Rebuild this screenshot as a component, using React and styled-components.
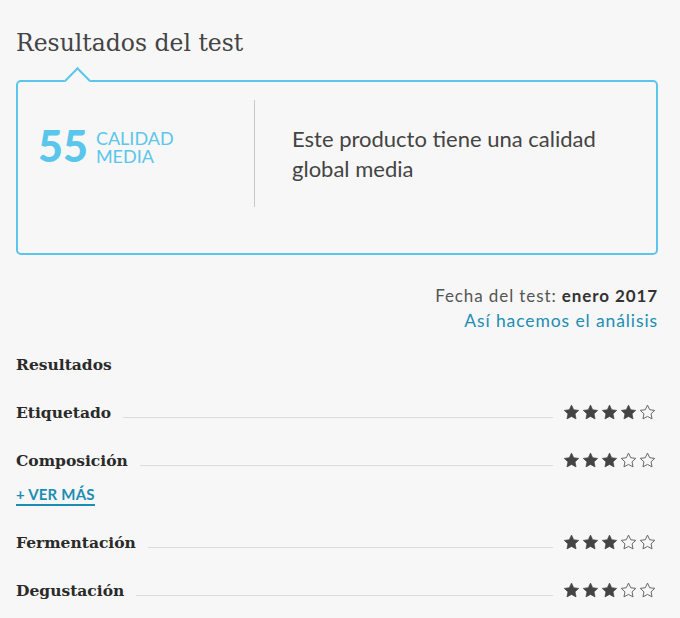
import React from 'react';
import styled, { createGlobalStyle } from 'styled-components';

const BLUE = '#5bc6ec';
const LINK = '#1c8db3';
const TEXT = '#444444';

const GlobalStyle = createGlobalStyle`
  html, body {
    margin: 0;
    padding: 0;
    background: #f7f7f7;
  }
  body {
    font-family: Lato, "Open Sans", sans-serif;
    color: ${TEXT};
  }
`;

const Page = styled.div`
  width: 642px;
  padding: 28px 22px 0 16px;
`;

const Title = styled.h1`
  margin: 0;
  font-family: "DejaVu Serif", serif;
  font-weight: 400;
  font-size: 23.5px;
  line-height: 30px;
  color: ${TEXT};
`;

const Box = styled.section`
  position: relative;
  margin-top: 22px;
  display: flex;
  height: 175px;
  box-sizing: border-box;
  padding: 18px 0 0;
  border: 2px solid ${BLUE};
  border-radius: 5px;

  &::before {
    content: '';
    position: absolute;
    top: -11px;
    left: 50px;
    width: 17px;
    height: 17px;
    background: #f7f7f7;
    border-top: 2px solid ${BLUE};
    border-left: 2px solid ${BLUE};
    transform: rotate(45deg);
  }
`;

const ScoreCol = styled.div`
  width: 216px;
  padding: 28px 0 0 20px;
  display: flex;
  align-items: flex-start;
  gap: 8px;
`;

const Score = styled.span`
  font-size: 43px;
  font-weight: 900;
  line-height: 36px;
  color: ${BLUE};
`;

const ScoreLabel = styled.span`
  font-size: 18px;
  line-height: 18px;
  text-transform: uppercase;
  color: ${BLUE};
  padding-top: 1px;
`;

const Summary = styled.div`
  align-self: flex-start;
  height: 83px;
  flex: 1;
  border-left: 1px solid #c8c8c8;
  padding: 24px 40px 0 37px;
  font-size: 22px;
  line-height: 30px;
  color: ${TEXT};
`;

const Meta = styled.div`
  margin-top: 28px;
  text-align: right;
  font-size: 17px;
  line-height: 25px;
  letter-spacing: 0.9px;
  color: #555;

  b {
    color: #333;
    font-weight: 700;
  }
`;

const Link = styled.a`
  color: ${LINK};
  text-decoration: none;
  font-size: 17.5px;
`;

const SectionTitle = styled.h2`
  margin: 17px 0 0;
  font-family: "DejaVu Serif", serif;
  font-weight: 700;
  font-size: 15.5px;
  line-height: 30px;
  color: #2a2a2a;
`;

const Row = styled.div`
  display: flex;
  align-items: center;
  height: 48px;
  margin-top: ${p => p.$gap || 0}px;
`;

const Label = styled.span`
  font-family: "DejaVu Serif", serif;
  font-weight: 700;
  font-size: 15.5px;
  color: #2a2a2a;
`;

const Leader = styled.span`
  flex: 1;
  height: 1px;
  margin: 10px 10px 0 12px;
  background: #dcdcdc;
`;

const Stars = styled.span`
  display: flex;
  gap: 2px;
  margin-right: 2px;
`;

const MoreLink = styled.a`
  display: inline-block;
  font-size: 15px;
  font-weight: 700;
  line-height: 18px;
  letter-spacing: 0.2px;
  color: ${LINK};
  text-decoration: none;
  border-bottom: 2px solid ${LINK};
  padding-bottom: 1px;
`;

const STAR = 'M12 1.5l3.1 6.6 7.1.9-5.2 4.9 1.4 7.1L12 17.5 5.6 21l1.4-7.1L1.8 9l7.1-.9z';

const Star = ({ filled }) => (
  <svg width="17" height="17" viewBox="0 0 24 24">
    <path
      d={STAR}
      fill={filled ? '#444' : 'none'}
      stroke={filled ? '#444' : '#666'}
      strokeWidth={filled ? 1 : 1.4}
      strokeLinejoin="round"
    />
  </svg>
);

const Rating = ({ value }) => (
  <Stars>
    {[1, 2, 3, 4, 5].map(i => (
      <Star key={i} filled={i <= value} />
    ))}
  </Stars>
);

const ResultRow = ({ label, value, gap }) => (
  <Row $gap={gap}>
    <Label>{label}</Label>
    <Leader />
    <Rating value={value} />
  </Row>
);

export default function App() {
  return (
    <Page>
      <GlobalStyle />
      <Title>Resultados del test</Title>
      <Box>
        <ScoreCol>
          <Score>55</Score>
          <ScoreLabel>
            Calidad
            <br />
            media
          </ScoreLabel>
        </ScoreCol>
        <Summary>Este producto tiene una calidad global media</Summary>
      </Box>
      <Meta>
        Fecha del test: <b>enero 2017</b>
        <br />
        <Link href="#">Así hacemos el análisis</Link>
      </Meta>
      <SectionTitle>Resultados</SectionTitle>
      <ResultRow label="Etiquetado" value={4} gap={8} />
      <ResultRow label="Composición" value={3} />
      <MoreLink href="#">+ VER MÁS</MoreLink>
      <ResultRow label="Fermentación" value={3} gap={12} />
      <ResultRow label="Degustación" value={3} />
    </Page>
  );
}
